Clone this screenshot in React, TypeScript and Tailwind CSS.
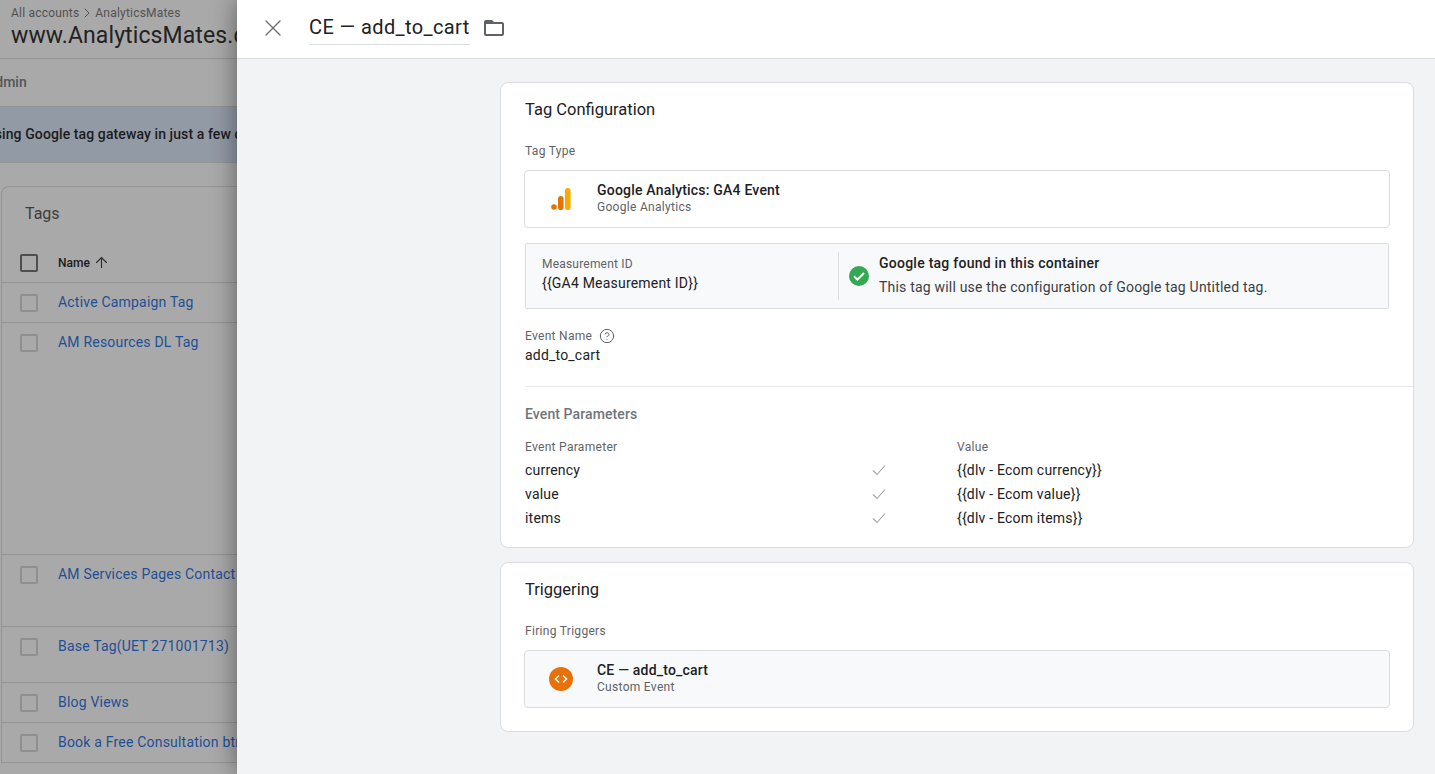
import { ArrowUp, ChevronRight, CircleHelp, X } from "lucide-react";

const tagRows = [
  { name: "Active Campaign Tag", height: "h-[40px]" },
  { name: "AM Resources DL Tag", height: "h-[232px]" },
  { name: "AM Services Pages Contact Form", height: "h-[72px]" },
  { name: "Base Tag(UET 271001713)", height: "h-[56px]" },
  { name: "Blog Views", height: "h-[40px]" },
  { name: "Book a Free Consultation btn", height: "h-[40px]" },
];

const params = [
  { name: "currency", value: "{{dlv - Ecom currency}}" },
  { name: "value", value: "{{dlv - Ecom value}}" },
  { name: "items", value: "{{dlv - Ecom items}}" },
];

function Background() {
  return (
    <div className="w-[237px] shrink-0 h-full overflow-hidden bg-[#a9a9a9] text-[#1c1c1c]">
      <div className="h-[59px] border-b border-[#949494] pl-[11px] pt-[5px] whitespace-nowrap">
        <div className="flex items-center text-[12px] leading-[16px] tracking-[0.2px] text-[#525252]">
          All accounts
          <ChevronRight className="w-[16px] h-[16px]" strokeWidth={1.5} />
          AnalyticsMates
        </div>
        <div className="mt-[1px] text-[23px] leading-[28px] text-[#222] tracking-[0.1px]">www.AnalyticsMates.com</div>
      </div>
      <div className="h-[48px] border-b border-[#949494] flex items-center -ml-[14px] text-[14px] font-medium text-[#555] whitespace-nowrap">
        Admin
      </div>
      <div className="h-[56px] border-b border-[#949494] bg-[#929aa6] flex items-center -ml-[37px] text-[14px] font-medium tracking-[0.1px] text-[#1c1c1c] whitespace-nowrap">
        Try using Google tag gateway in just a few clicks
      </div>
      <div className="mt-[23px] ml-[1px] w-[400px] border-l border-t border-[#959595] rounded-tl-[8px]">
        <div className="h-[53px] flex items-center pl-[23px] text-[16px] text-[#3d3d3d]">Tags</div>
        <div className="h-[43px] border-b border-[#949494] flex items-center pl-[18px] pt-[3px]">
          <div className="w-[18px] h-[18px] border-2 border-[#4e4e4e] rounded-[2px]" />
          <span className="ml-[20px] text-[12px] font-medium text-[#1c1c1c]">Name</span>
          <ArrowUp className="ml-[3px] w-[17px] h-[17px] text-[#2a2a2a]" strokeWidth={1.6} />
        </div>
        {tagRows.map((row) => (
          <div key={row.name} className={`${row.height} border-b border-[#949494] flex items-start pl-[18px] pt-[10px]`}>
            <div className="w-[18px] h-[18px] mt-[1px] border-2 border-[#8f8f8f] rounded-[2px] shrink-0" />
            <span className="ml-[20px] text-[14px] leading-[18px] tracking-[0.2px] text-[#1f4f96] whitespace-nowrap">{row.name}</span>
          </div>
        ))}
      </div>
    </div>
  );
}

function AnalyticsLogo() {
  return (
    <svg width="20" height="22" viewBox="0 0 20 22">
      <rect x="14" y="0" width="5.6" height="22" rx="2.8" fill="#f9ab00" />
      <rect x="7" y="8" width="5.6" height="14" rx="2.8" fill="#e37400" />
      <circle cx="3" cy="19" r="2.8" fill="#e37400" />
    </svg>
  );
}

function FolderIcon() {
  return (
    <svg width="24" height="24" viewBox="0 0 24 24" className="ml-[12px] mb-[3px]" fill="#5f6368">
      <path d="M20 6h-8l-2-2H4c-1.1 0-2 .9-2 2v12c0 1.1.9 2 2 2h16c1.1 0 2-.9 2-2V8c0-1.1-.9-2-2-2zm0 12H4V8h16v10z" />
    </svg>
  );
}

function CheckBadge() {
  return (
    <svg width="20" height="20" viewBox="0 0 20 20" className="shrink-0">
      <circle cx="10" cy="10" r="10" fill="#34a853" />
      <path d="M5 10.3l3.4 3.4L15 7" fill="none" stroke="#fff" strokeWidth="2" />
    </svg>
  );
}

function CodeBadge() {
  return (
    <svg width="24" height="24" viewBox="0 0 24 24">
      <circle cx="12" cy="12" r="12" fill="#e8710a" />
      <path d="M10 8.5L6.5 12l3.5 3.5M14 8.5l3.5 3.5-3.5 3.5" fill="none" stroke="#fff" strokeWidth="1.5" />
    </svg>
  );
}

function ThinCheck() {
  return (
    <svg width="14" height="12" viewBox="0 0 14 12">
      <path d="M1 6.5l4 4L13 1.5" fill="none" stroke="#a3a3a3" strokeWidth="1.1" />
    </svg>
  );
}

function TagConfiguration() {
  return (
    <div className="h-[466px] bg-white border border-[#dadce0] rounded-[8px]">
      <div className="pt-[15px] pl-[24px] text-[16.5px] leading-[24px] text-[#202124]">Tag Configuration</div>
      <div className="mt-[21px] pl-[24px] text-[12px] leading-[16px] tracking-[0.3px] text-[#5f6368]">Tag Type</div>
      <div className="mt-[11px] ml-[23px] mr-[23px] h-[58px] border border-[#dadce0] rounded-[4px] flex items-center pl-[26px]">
        <AnalyticsLogo />
        <div className="ml-[26px] mb-[2px]">
          <div className="text-[14px] leading-[18px] tracking-[0.2px] font-medium text-[#202124]">Google Analytics: GA4 Event</div>
          <div className="text-[12px] leading-[16px] tracking-[0.3px] text-[#5f6368]">Google Analytics</div>
        </div>
      </div>
      <div className="mt-[15px] ml-[24px] mr-[24px] h-[66px] bg-[#f8f9fa] border border-[#dadce0] rounded-[2px] flex items-center">
        <div className="w-[312px] pl-[16px] mb-[3px]">
          <div className="text-[12px] leading-[16px] tracking-[0.2px] text-[#5f6368]">Measurement ID</div>
          <div className="mt-[1px] text-[14px] leading-[20px] tracking-[0.2px] text-[#202124]">{"{{GA4 Measurement ID}}"}</div>
        </div>
        <div className="w-px h-[48px] bg-[#dadce0]" />
        <div className="ml-[10px]"><CheckBadge /></div>
        <div className="ml-[10px] mb-[3px]">
          <div className="text-[14px] leading-[20px] tracking-[0.25px] font-medium text-[#202124]">Google tag found in this container</div>
          <div className="mt-[4px] text-[14px] leading-[20px] tracking-[0.2px] text-[#3c4043]">This tag will use the configuration of Google tag Untitled tag.</div>
        </div>
      </div>
      <div className="mt-[19px] pl-[24px] flex items-center text-[12px] leading-[16px] tracking-[0.3px] text-[#5f6368]">
        Event Name
        <CircleHelp className="ml-[7px] w-[16px] h-[16px]" strokeWidth={1.5} />
      </div>
      <div className="mt-[1px] pl-[24px] text-[14px] leading-[20px] tracking-[0.2px] text-[#202124]">add_to_cart</div>
      <div className="mt-[21px] ml-[24px] border-t border-[#e8eaed]" />
      <div className="mt-[18px] pl-[24px] text-[14px] leading-[18px] tracking-[0.1px] font-medium text-[#70757a]">Event Parameters</div>
      <div className="mt-[16px] pl-[24px] grid grid-cols-[432px_1fr] text-[12px] leading-[16px] tracking-[0.3px] text-[#5f6368]">
        <span>Event Parameter</span>
        <span>Value</span>
      </div>
      <div className="mt-[3px] pl-[24px]">
        {params.map((p) => (
          <div key={p.name} className="h-[24px] grid grid-cols-[347px_85px_1fr] items-center text-[14px] tracking-[0.2px] text-[#202124]">
            <span>{p.name}</span>
            <ThinCheck />
            <span>{p.value}</span>
          </div>
        ))}
      </div>
    </div>
  );
}

function Triggering() {
  return (
    <div className="h-[170px] bg-white border border-[#dadce0] rounded-[8px]">
      <div className="pt-[15px] pl-[24px] text-[16.5px] leading-[24px] text-[#202124]">Triggering</div>
      <div className="mt-[21px] pl-[24px] text-[12px] leading-[16px] tracking-[0.3px] text-[#5f6368]">Firing Triggers</div>
      <div className="mt-[11px] ml-[23px] mr-[23px] h-[58px] bg-[#f8f9fa] border border-[#dadce0] rounded-[4px] flex items-center pl-[24px]">
        <CodeBadge />
        <div className="ml-[24px] mb-[2px]">
          <div className="text-[14px] leading-[18px] tracking-[0.2px] font-medium text-[#202124]">CE — add_to_cart</div>
          <div className="text-[12px] leading-[16px] tracking-[0.3px] text-[#5f6368]">Custom Event</div>
        </div>
      </div>
    </div>
  );
}

export default function App() {
  return (
    <div className="flex w-[1435px] h-[774px] overflow-hidden font-['Roboto',sans-serif]">
      <Background />
      <div className="relative flex-1 flex flex-col bg-[#f1f3f4] shadow-[0_0_24px_rgba(0,0,0,0.45)]">
        <div className="h-[59px] shrink-0 bg-white border-b border-[#dadce0] flex items-center pl-[22px]">
          <X className="w-[28px] h-[28px] mb-[3px] text-[#6b6f73]" strokeWidth={1.2} />
          <div className="ml-[22px] h-[33px] mb-[2px] border-b border-[#dadce0] text-[20px] leading-[30px] tracking-[0.4px] text-[#202124] whitespace-nowrap">
            CE — add_to_cart
          </div>
          <FolderIcon />
        </div>
        <div className="flex-1 flex flex-col gap-[14px] pt-[23px] pl-[263px] pr-[21px]">
          <TagConfiguration />
          <Triggering />
        </div>
      </div>
    </div>
  );
}
